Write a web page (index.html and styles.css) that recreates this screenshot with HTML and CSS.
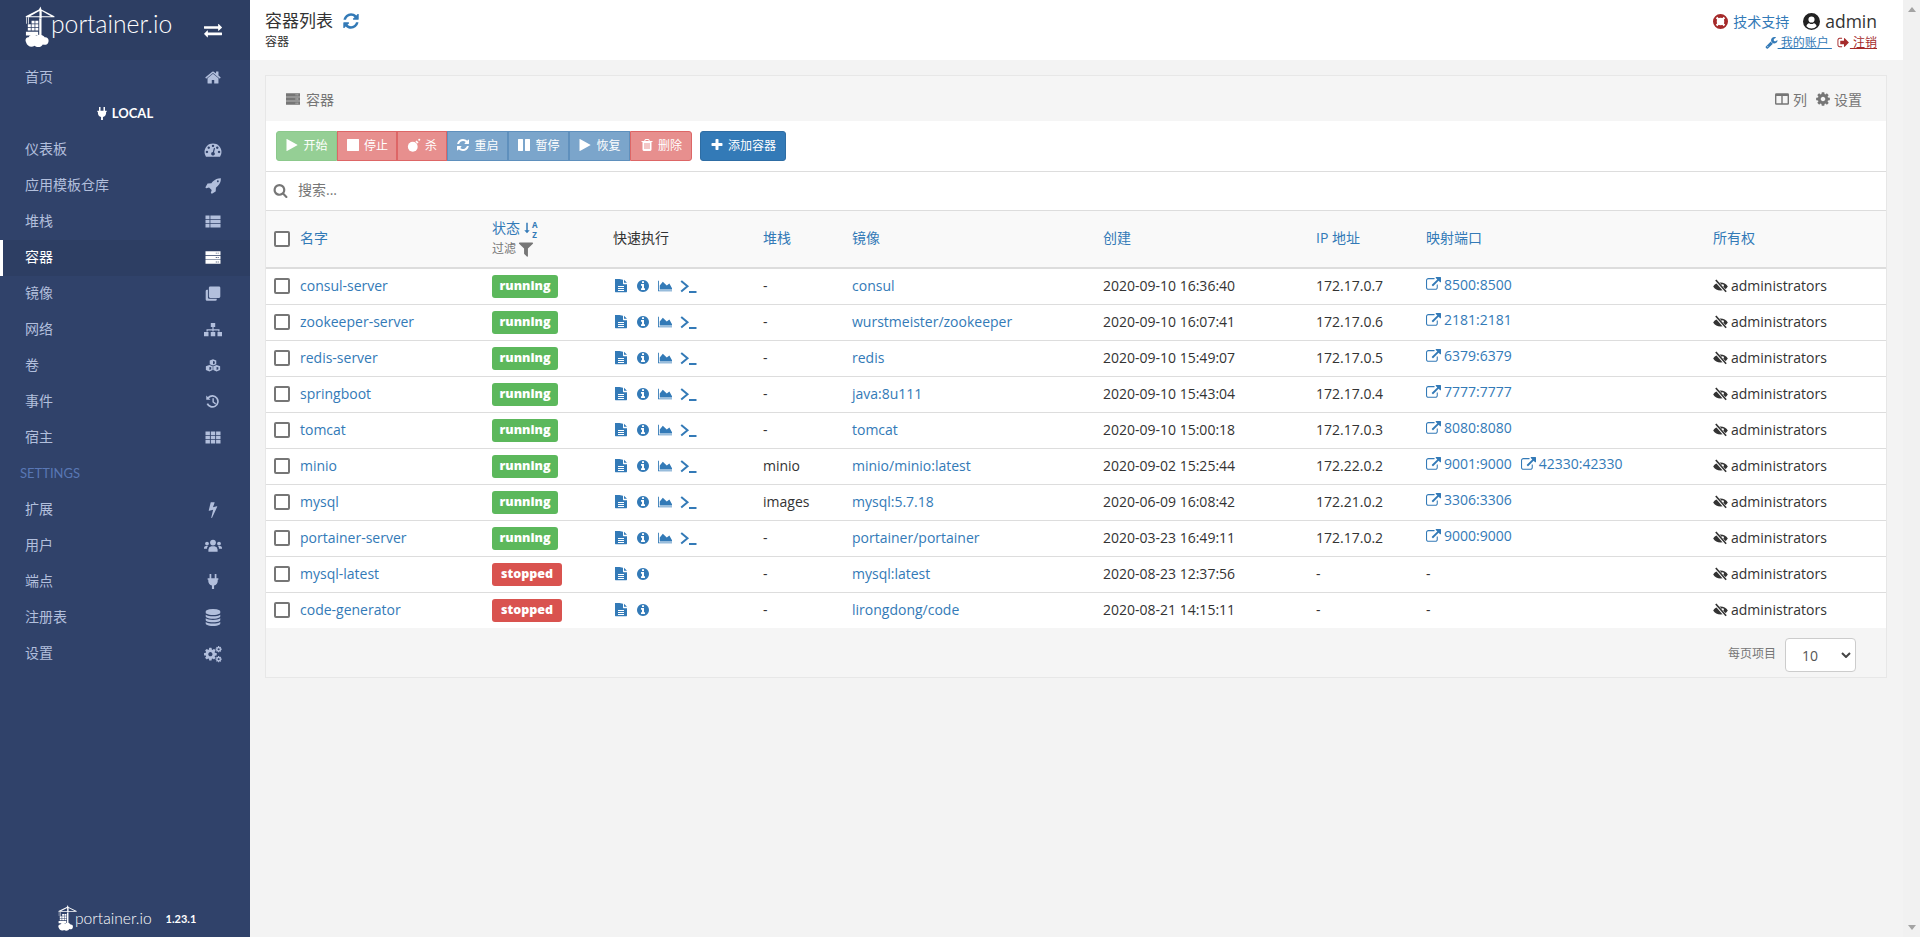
FILE: index.html
```html
<!DOCTYPE html>
<html lang="zh">
<head>
<meta charset="utf-8">
<title>Portainer</title>
<link rel="stylesheet" href="styles.css">
</head>
<body>
<svg class="defs" width="0" height="0" aria-hidden="true">
<defs>
<symbol id="i-home" viewBox="0 0 1792 1792"><path d="M1472 992v480q0 26-19 45t-45 19h-384v-384h-256v384h-384q-26 0-45-19t-19-45v-480q0-1 .5-3t.5-3l575-474 575 474q1 2 1 6zm223-69l-62 74q-8 9-21 11h-3q-13 0-21-7l-692-577-692 577q-12 8-24 7-13-2-21-11l-62-74q-8-10-7-23.5t11-21.5l719-599q32-26 76-26t76 26l244 204v-195q0-14 9-23t23-9h192q14 0 23 9t9 23v408l219 182q10 8 11 21.5t-7 23.5z"/></symbol>
<symbol id="i-refresh" viewBox="0 0 1792 1792"><path d="M1639 1056q0 5-1 7-64 268-268 434.5t-478 166.5q-146 0-282.5-55t-243.5-157l-129 129q-19 19-45 19t-45-19-19-45v-448q0-26 19-45t45-19h448q26 0 45 19t19 45-19 45l-137 137q71 66 161 102t187 36q134 0 250-65t186-179q11-17 53-117 8-23 30-23h192q13 0 22.5 9.5t9.5 22.5zm25-800v448q0 26-19 45t-45 19h-448q-26 0-45-19t-19-45 19-45l138-138q-148-137-349-137-134 0-250 65t-186 179q-11 17-53 117-8 23-30 23h-199q-13 0-22.5-9.5t-9.5-22.5v-7q65-268 270-434.5t480-166.5q146 0 284 55.5t245 156.5l130-129q19-19 45-19t45 19 19 45z"/></symbol>
<symbol id="i-play" viewBox="0 0 1792 1792"><path d="M1576 927l-1328 738q-23 13-39.5 3t-16.5-36v-1472q0-26 16.5-36t39.5 3l1328 738q23 13 23 31t-23 31z"/></symbol>
<symbol id="i-stop" viewBox="0 0 1792 1792"><path d="M1664 192v1408q0 26-19 45t-45 19h-1408q-26 0-45-19t-19-45v-1408q0-26 19-45t45-19h1408q26 0 45 19t19 45z"/></symbol>
<symbol id="i-pause" viewBox="0 0 1792 1792"><path d="M1664 192v1408q0 26-19 45t-45 19h-512q-26 0-45-19t-19-45v-1408q0-26 19-45t45-19h512q26 0 45 19t19 45zm-896 0v1408q0 26-19 45t-45 19h-512q-26 0-45-19t-19-45v-1408q0-26 19-45t45-19h512q26 0 45 19t19 45z"/></symbol>
<symbol id="i-plus" viewBox="0 0 1792 1792"><path d="M1600 736v192q0 40-28 68t-68 28h-416v416q0 40-28 68t-68 28h-192q-40 0-68-28t-28-68v-416h-416q-40 0-68-28t-28-68v-192q0-40 28-68t68-28h416v-416q0-40 28-68t68-28h192q40 0 68 28t28 68v416h416q40 0 68 28t28 68z"/></symbol>
<symbol id="i-search" viewBox="0 0 1792 1792"><path d="M1216 832q0-185-131.5-316.5t-316.5-131.5-316.5 131.5-131.5 316.5 131.5 316.5 316.5 131.5 316.5-131.5 131.5-316.5zm512 832q0 52-38 90t-90 38q-54 0-90-38l-343-342q-179 124-399 124-143 0-273.5-55.5t-225-150-150-225-55.5-273.5 55.5-273.5 150-225 225-150 273.5-55.5 273.5 55.5 225 150 150 225 55.5 273.5q0 220-124 399l343 343q37 37 37 90z"/></symbol>
<symbol id="i-trash" viewBox="0 0 1792 1792"><path d="M704 1376v-704q0-14-9-23t-23-9h-64q-14 0-23 9t-9 23v704q0 14 9 23t23 9h64q14 0 23-9t9-23zm256 0v-704q0-14-9-23t-23-9h-64q-14 0-23 9t-9 23v704q0 14 9 23t23 9h64q14 0 23-9t9-23zm256 0v-704q0-14-9-23t-23-9h-64q-14 0-23 9t-9 23v704q0 14 9 23t23 9h64q14 0 23-9t9-23zm-544-992h448l-48-117q-7-9-17-11h-317q-10 2-17 11zm928 32v64q0 14-9 23t-23 9h-96v948q0 83-47 143.5t-113 60.5h-832q-66 0-113-58.5t-47-141.5v-952h-96q-14 0-23-9t-9-23v-64q0-14 9-23t23-9h309l70-167q15-37 54-63t79-26h320q40 0 79 26t54 63l70 167h309q14 0 23 9t9 23z"/></symbol>
<symbol id="i-info" viewBox="0 0 1792 1792"><path d="M1152 1376v-160q0-14-9-23t-23-9h-96v-512q0-14-9-23t-23-9h-320q-14 0-23 9t-9 23v160q0 14 9 23t23 9h96v320h-96q-14 0-23 9t-9 23v160q0 14 9 23t23 9h448q14 0 23-9t9-23zm-128-896v-160q0-14-9-23t-23-9h-192q-14 0-23 9t-9 23v160q0 14 9 23t23 9h192q14 0 23-9t9-23zm640 416q0 209-103 385.5t-279.5 279.5-385.5 103-385.5-103-279.5-279.5-103-385.5 103-385.5 279.5-279.5 385.5-103 385.5 103 279.5 279.5 103 385.5z"/></symbol>
<symbol id="i-file" viewBox="0 0 1792 1792"><path fill-rule="evenodd" d="M1152 96v480q0 40 28 68t68 28h416v924q0 40-28 68t-68 28h-1344q-40 0-68-28t-28-68v-1600q0-40 28-68t68-28zM1280 96l384 384h-384zM512 896v128h768v-128zM512 1152v128h768v-128zM512 1408v128h768v-128z"/></symbol>
<symbol id="i-chart" viewBox="0 0 2048 1792"><path d="M2048 1536v128h-2048v-1536h128v1408zM1664 512l384 704v192h-1792v-576l448-576 576 576z"/></symbol>
<symbol id="i-term" viewBox="0 0 17 17"><path d="M1.200 3l6.300 5.300-6.300 5.300" fill="none" stroke="currentColor" stroke-width="2"/><path d="M9 13h7.500v2h-7.500z"/></symbol>
<symbol id="i-link" viewBox="0 0 1792 1792"><path d="M1408 928v320q0 119-84.5 203.5t-203.5 84.5h-832q-119 0-203.5-84.5t-84.5-203.5v-832q0-119 84.5-203.5t203.5-84.5h704q14 0 23 9t9 23v64q0 14-9 23t-23 9h-704q-66 0-113 47t-47 113v832q0 66 47 113t113 47h832q66 0 113-47t47-113v-320q0-14 9-23t23-9h64q14 0 23 9t9 23zm384-864v512q0 26-19 45t-45 19-45-19l-176-176-652 652q-10 10-23 10t-23-10l-114-114q-10-10-10-23t10-23l652-652-176-176q-19-19-19-45t19-45 45-19h512q26 0 45 19t19 45z"/></symbol>
<symbol id="i-eyeoff" viewBox="0 0 16 16"><path d="M0.200 8c3-5.600 12.600-5.600 15.600 0-3 5.600-12.600 5.600-15.600 0z"/><circle class="eye-hole" cx="10.300" cy="7" r="1.300"/><path class="eye-cut" d="M2.800 1.400l11 12.400" stroke-width="3.200" fill="none"/><path d="M3 1l11 12.600" stroke="currentColor" stroke-width="1.700" fill="none"/></symbol>
<symbol id="i-bolt" viewBox="0 0 1792 1792"><path d="M1333 566q18 20 7 44l-540 1157q-13 25-42 25-4 0-14-2-17-5-25.5-19t-4.5-30l197-808-406 101q-4 1-12 1-18 0-31-11-18-15-13-39l201-825q4-14 16-23t28-9h328q19 0 32 12.5t13 29.5q0 8-5 18l-171 463 396-98q8-2 12-2 19 0 34 15z"/></symbol>
<symbol id="i-rocket" viewBox="0 0 1792 1792"><path d="M1504 448q0-40-28-68t-68-28-68 28-28 68 28 68 68 28 68-28 28-68zm224-288q0 249-75.5 430.5t-253.5 360.5q-81 80-195 176l-20 379q-2 16-16 26l-384 224q-7 4-16 4-12 0-23-9l-64-64q-13-14-8-32l85-276-281-281-276 85q-3 1-9 1-14 0-23-9l-64-64q-17-19-5-39l224-384q10-14 26-16l379-20q96-114 176-195 188-187 358-258t431-71q14 0 24 9.5t10 22.5z"/></symbol>
<symbol id="i-dash" viewBox="0 0 1792 1792"><path d="M384 1152q0-53-37.5-90.5t-90.5-37.5-90.5 37.5-37.5 90.5 37.5 90.5 90.5 37.5 90.5-37.5 37.5-90.5zm192-448q0-53-37.5-90.5t-90.5-37.5-90.5 37.5-37.5 90.5 37.5 90.5 90.5 37.5 90.5-37.5 37.5-90.5zm428 481l101-382q6-26-7.5-48.5t-38.5-29.5-48 6.5-30 39.5l-101 382q-60 5-107 43.5t-63 98.5q-20 77 20 146t117 89 146-20 89-117q16-60-6-117t-72-91zm660-33q0-53-37.5-90.5t-90.5-37.5-90.5 37.5-37.5 90.5 37.5 90.5 90.5 37.5 90.5-37.5 37.5-90.5zm-640-640q0-53-37.5-90.5t-90.5-37.5-90.5 37.5-37.5 90.5 37.5 90.5 90.5 37.5 90.5-37.5 37.5-90.5zm448 192q0-53-37.5-90.5t-90.5-37.5-90.5 37.5-37.5 90.5 37.5 90.5 90.5 37.5 90.5-37.5 37.5-90.5zm320 448q0 261-141 483-19 29-54 29h-1402q-35 0-54-29-141-221-141-483 0-182 71-348t191-286 286-191 348-71 348 71 286 191 191 286 71 348z"/></symbol>
<symbol id="i-db" viewBox="0 0 1792 1792"><path d="M896 768q237 0 443-43t325-127v170q0 69-103 128t-280 93.5-385 34.5-385-34.5-280-93.5-103-128v-170q119 84 325 127t443 43zm0 768q237 0 443-43t325-127v170q0 69-103 128t-280 93.5-385 34.5-385-34.5-280-93.5-103-128v-170q119 84 325 127t443 43zm0-384q237 0 443-43t325-127v170q0 69-103 128t-280 93.5-385 34.5-385-34.5-280-93.5-103-128v-170q119 84 325 127t443 43zm0-1152q208 0 385 34.5t280 93.5 103 128v128q0 69-103 128t-280 93.5-385 34.5-385-34.5-280-93.5-103-128v-128q0-69 103-128t280-93.5 385-34.5z"/></symbol>
<symbol id="i-cog" viewBox="0 0 1792 1792"><path d="M1152 896q0-106-75-181t-181-75-181 75-75 181 75 181 181 75 181-75 75-181zm512-109v222q0 12-8 23t-20 13l-185 28q-19 54-39 91 35 50 107 138 10 12 10 25t-9 23q-27 37-99 108t-94 71q-12 0-26-9l-138-108q-44 23-91 38-16 136-29 186-7 28-36 28h-222q-14 0-24.5-8.5t-11.5-21.5l-28-184q-49-16-90-37l-141 107q-10 9-25 9-14 0-25-11-126-114-165-168-7-10-7-23 0-12 8-23 15-21 51-66.5t54-70.5q-27-50-41-99l-183-27q-13-2-21-12.5t-8-23.5v-222q0-12 8-23t19-13l186-28q14-46 39-92-40-57-107-138-10-12-10-24 0-10 9-23 26-36 98.5-107.5t94.5-71.5q13 0 26 10l138 107q44-23 91-38 16-136 29-186 7-28 36-28h222q14 0 24.5 8.5t11.5 21.5l28 184q49 16 90 37l142-107q9-9 24-9 13 0 25 10 129 119 165 170 7 8 7 22 0 12-8 23-15 21-51 66.5t-54 70.5q26 50 41 98l183 28q13 2 21 12.5t8 23.5z"/></symbol>
<symbol id="i-cogs" viewBox="0 0 1792 1792"><g transform="translate(-100 180) scale(.82)"><use href="#p-gear"/></g><g transform="translate(1100 60) scale(.4)"><use href="#p-gear"/></g><g transform="translate(1100 1050) scale(.4)"><use href="#p-gear"/></g></symbol>
<path id="p-gear" d="M1152 896q0-106-75-181t-181-75-181 75-75 181 75 181 181 75 181-75 75-181zm512-109v222q0 12-8 23t-20 13l-185 28q-19 54-39 91 35 50 107 138 10 12 10 25t-9 23q-27 37-99 108t-94 71q-12 0-26-9l-138-108q-44 23-91 38-16 136-29 186-7 28-36 28h-222q-14 0-24.5-8.5t-11.5-21.5l-28-184q-49-16-90-37l-141 107q-10 9-25 9-14 0-25-11-126-114-165-168-7-10-7-23 0-12 8-23 15-21 51-66.5t54-70.5q-27-50-41-99l-183-27q-13-2-21-12.5t-8-23.5v-222q0-12 8-23t19-13l186-28q14-46 39-92-40-57-107-138-10-12-10-24 0-10 9-23 26-36 98.5-107.5t94.5-71.5q13 0 26 10l138 107q44-23 91-38 16-136 29-186 7-28 36-28h222q14 0 24.5 8.5t11.5 21.5l28 184q49 16 90 37l142-107q9-9 24-9 13 0 25 10 129 119 165 170 7 8 7 22 0 12-8 23-15 21-51 66.5t-54 70.5q26 50 41 98l183 28q13 2 21 12.5t8 23.5z"/>
<symbol id="i-filter" viewBox="0 0 1792 1792"><path d="M1595 295q17 41-14 70l-493 493v742q0 42-39 59-13 5-25 5-27 0-45-19l-256-256q-19-19-19-45v-486l-493-493q-31-29-14-70 17-39 59-39h1280q42 0 59 39z"/></symbol>
<symbol id="i-wrench" viewBox="0 0 1792 1792"><path d="M448 1472q0-26-19-45t-45-19-45 19-19 45 19 45 45 19 45-19 19-45zm644-420l-682 682q-37 37-90 37-52 0-91-37l-106-108q-38-36-38-90 0-53 38-91l681-681q39 98 114.5 173.5t173.5 114.5zm634-435q0 39-23 106-47 134-164.5 217.5t-258.5 83.5q-185 0-316.5-131.5t-131.5-316.5 131.5-316.5 316.5-131.5q58 0 121.5 16.5t107.5 46.5q16 11 16 28t-16 28l-293 169v224l193 107q5-3 79-48.5t135.5-81 70.5-35.5q15 0 23.5 10t8.5 25z"/></symbol>
<symbol id="i-signout" viewBox="0 0 1792 1792"><path d="M704 1440q0 4 1 20t.5 26.5-3 23.5-10 19.5-20.5 6.5h-320q-119 0-203.5-84.5t-84.5-203.5v-704q0-119 84.5-203.5t203.5-84.5h320q13 0 22.5 9.5t9.5 22.5q0 4 1 20t.5 26.5-3 23.5-10 19.5-20.5 6.5h-320q-66 0-113 47t-47 113v704q0 66 47 113t113 47h312l11.5 1 11.5 3 8 5.5 7 9 2 13.5zm928-544q0 26-19 45l-544 544q-19 19-45 19t-45-19-19-45v-288h-448q-26 0-45-19t-19-45v-384q0-26 19-45t45-19h448v-288q0-26 19-45t45-19 45 19l544 544q19 19 19 45z"/></symbol>
<symbol id="i-exchange" viewBox="0 0 1792 1792"><path d="M1792 1184v192q0 13-9.5 22.5t-22.5 9.5h-1376v192q0 13-9.5 22.5t-22.5 9.5q-12 0-24-10l-319-320q-9-9-9-22 0-14 9-23l320-320q9-9 23-9 13 0 22.5 9.5t9.5 22.5v192h1376q13 0 22.5 9.5t9.5 22.5zm0-544q0 14-9 23l-320 320q-9 9-23 9-13 0-22.5-9.5t-9.5-22.5v-192h-1376q-13 0-22.5-9.5t-9.5-22.5v-192q0-13 9.5-22.5t22.5-9.5h1376v-192q0-14 9-23t23-9q12 0 24 10l319 319q9 9 9 23z"/></symbol>
<symbol id="i-thlist" viewBox="0 0 16 16"><path d="M0 1.500h4.300v3.800h-4.300zM5.200 1.500h10.800v3.800h-10.800zM0 6.100h4.300v3.800h-4.300zM5.200 6.100h10.800v3.800h-10.800zM0 10.700h4.300v3.800h-4.300zM5.200 10.700h10.800v3.800h-10.800z"/></symbol>
<symbol id="i-th" viewBox="0 0 16 16"><path d="M0 1.500h4.700v3.800h-4.700zM5.650 1.500h4.700v3.800h-4.700zM11.300 1.500h4.700v3.800h-4.700zM0 6.100h4.700v3.800h-4.700zM5.650 6.100h4.700v3.800h-4.700zM11.300 6.100h4.700v3.800h-4.700zM0 10.700h4.700v3.800h-4.700zM5.650 10.700h4.700v3.800h-4.700zM11.300 10.700h4.700v3.800h-4.700z"/></symbol>
<symbol id="i-server" viewBox="0 0 16 16"><path fill-rule="evenodd" d="M0 1.300h16v4h-16zM11 2.800v1h1v-1zM13 2.800v1h1v-1zM0 6h16v4h-16zM11 7.500v1h1v-1zM13 7.500v1h1v-1zM0 10.700h16v4h-16zM11 12.200v1h1v-1zM13 12.200v1h1v-1z"/></symbol>
<symbol id="i-clone" viewBox="0 0 16 16"><path d="M5 0.500h9.400a1.400 1.400 0 0 1 1.400 1.400v9.400a1.400 1.400 0 0 1-1.400 1.400h-9.400a1.400 1.400 0 0 1-1.400-1.400v-9.400a1.400 1.400 0 0 1 1.400-1.400zM2.600 4v8.200a1.400 1.400 0 0 0 1.400 1.400h8v.8a1.400 1.400 0 0 1-1.400 1.400h-9a1.400 1.400 0 0 1-1.400-1.400v-9a1.400 1.400 0 0 1 1.400-1.400z"/></symbol>
<symbol id="i-sitemap" viewBox="0 0 18 16"><path d="M6.800 1h4.400v4h-1.600v2.200h5.900v2.300h-1.200v-1.100h-4.700v1.100h-1.200v-1.100h-4.700v1.100h-1.200v-2.300h5.900v-2.200h-1.600zM0 10h4.500v4.300h-4.500zM6.750 10h4.500v4.300h-4.500zM13.500 10h4.500v4.300h-4.500z"/></symbol>
<symbol id="i-cubes" viewBox="0 0 16 16"><path fill-rule="evenodd" d="M8 1.200l3.500 1.400v4l-3.500 1.500-3.500-1.500v-4zM8 3.200v3.400l1.900-.8v-2.200zM4.200 7.500l3.500 1.400v4l-3.500 1.500-3.800-1.500v-4zM4.200 9.500v3.400l1.900-.8v-2.200zM11.800 7.500l3.800 1.400v4l-3.800 1.500-3.500-1.500v-4zM11.800 9.500v3.400l1.900-.8v-2.200z"/></symbol>
<symbol id="i-history" viewBox="0 0 16 16"><path d="M0.800 1.600l1.600 1.600a6.800 6.800 0 1 1-1.300 7.400l1.700-.7a5 5 0 1 0 .9-5.400l1.600 1.600h-4.500zM7.400 4.400h1.500v3.800l2.400 1.700-.9 1.200-3-2.200z"/></symbol>
<symbol id="i-users" viewBox="0 0 18 16"><circle cx="9" cy="4.600" r="2.900"/><circle cx="3" cy="5.600" r="1.900"/><circle cx="15" cy="5.600" r="1.900"/><path d="M4.400 13.800v-2.400a3.600 3.600 0 0 1 3-3.200h3.200a3.600 3.600 0 0 1 3 3.200v2.400zM0 10.800v-1a2 2 0 0 1 2-1.900h2a4 4 0 0 0-1 2.900zM18 10.800v-1a2 2 0 0 0-2-1.900h-2a4 4 0 0 1 1 2.900z"/></symbol>
<symbol id="i-plug" viewBox="0 0 10 14"><path d="M1.800 0h1.600v4h3.200v-4h1.600v4h1.800v1.400h-.6v1.400a4.400 4.400 0 0 1-3.400 3.900v3.300h-2v-3.300a4.400 4.400 0 0 1-3.400-3.900v-1.400h-.6v-1.400h1.800z"/></symbol>
<symbol id="i-columns" viewBox="0 0 16 16"><path fill-rule="evenodd" d="M1.500 1.500h13a1.500 1.500 0 0 1 1.500 1.500v10a1.500 1.500 0 0 1-1.500 1.500h-13a1.500 1.500 0 0 1-1.500-1.500v-10a1.500 1.500 0 0 1 1.500-1.500zM1.600 4.600v8.300h5.600v-8.300zM8.800 4.600v8.300h5.600v-8.300z"/></symbol>
<symbol id="i-bomb" viewBox="0 0 16 16"><circle cx="6.600" cy="10" r="5.600"/><path d="M9.600 4.200l1.400-1.400 2.200 2.200-1.400 1.400z"/><circle cx="14" cy="2" r="1.200"/></symbol>
<symbol id="i-ring" viewBox="0 0 16 16"><circle cx="8" cy="8" r="6" fill="none" stroke="currentColor" stroke-width="4"/><path class="ring-cut" d="M3 4.600l1.600-1.600 2.500 2.500-1.600 1.600zM11.400 3l1.600 1.600-2.500 2.500-1.600-1.600zM13 11.400l-1.600 1.600-2.500-2.500 1.600-1.600zM4.600 13l-1.600-1.600 2.500-2.500 1.600 1.600z"/></symbol>
<symbol id="i-user" viewBox="0 0 16 16"><path fill-rule="evenodd" d="M8 0a8 8 0 1 1 0 16a8 8 0 0 1 0-16zM8 3.200a2.900 2.900 0 1 0 0 5.800a2.900 2.900 0 0 0 0-5.800zM3.200 12.400a6.300 6.300 0 0 0 9.600 0c-.3-1.600-1.300-2.600-2.600-2.800a3.700 3.700 0 0 1-4.400 0c-1.300.2-2.300 1.200-2.600 2.800z"/></symbol>
<symbol id="i-sort" viewBox="0 0 8 16"><path d="M3 1h2v10h2.600l-3.600 4-3.600-4h2.600z"/></symbol>
<symbol id="i-logo" viewBox="0 0 32 44"><path d="M16.600 0l.9 3.400 13.900 7v1.200h-13.600v1.200h-2.400v-1.200h-14.600v-1.200l14-7zM15.400 5l-10 5.400h10zM17.800 5v5.400h10z"/><path d="M15.200 13h2.400v20h-2.400zM1.400 11.600h.8v7h-.8zM3.400 11.600h.8v7h-.8z"/><path d="M3 19h3.200v3h-3.200zM7 19h3.200v3h-3.200zM11 19h3.200v3h-3.200zM7 15.200h3.200v3h-3.200zM11 15.200h3.200v3h-3.200zM3 22.800h3.200v3h-3.200zM7 22.800h3.200v3h-3.200zM11 22.800h3.200v3h-3.200zM1 27h13v4h-13z"/><path d="M1 38c-1.400-3 .8-5.600 3-5 1-3.400 6-4 8-1.400 2.600-2.400 7.400-1.600 9 1.400 3.200-.4 5 2.400 3.800 5.400-.6 2.200-3 3.200-5.800 2.200-1.400 3.200-6.600 3.400-8.800 1.400-3 1.800-7.600 1.400-9.200-4z"/></symbol>
</defs>
</svg>
<div class="app">
  <aside class="sidebar">
    <div class="brand">
      <span class="logo"><svg class="logo-mark"><use href="#i-logo"/></svg><span class="logo-text">portainer.io</span></span>
      <svg class="ic exchange"><use href="#i-exchange"/></svg>
    </div>
    <nav class="nav">
      <a class="nav-item"><span>首页</span><svg class="ic nav-ic lg"><use href="#i-home"/></svg></a>
      <div class="nav-endpoint"><svg class="ic plug-s"><use href="#i-plug"/></svg><span>LOCAL</span></div>
      <a class="nav-item"><span>仪表板</span><svg class="ic nav-ic lg"><use href="#i-dash"/></svg></a>
      <a class="nav-item"><span>应用模板仓库</span><svg class="ic nav-ic lg"><use href="#i-rocket"/></svg></a>
      <a class="nav-item"><span>堆栈</span><svg class="ic nav-ic"><use href="#i-thlist"/></svg></a>
      <a class="nav-item active"><span>容器</span><svg class="ic nav-ic"><use href="#i-server"/></svg></a>
      <a class="nav-item"><span>镜像</span><svg class="ic nav-ic"><use href="#i-clone"/></svg></a>
      <a class="nav-item"><span>网络</span><svg class="ic nav-ic wide"><use href="#i-sitemap"/></svg></a>
      <a class="nav-item"><span>卷</span><svg class="ic nav-ic"><use href="#i-cubes"/></svg></a>
      <a class="nav-item"><span>事件</span><svg class="ic nav-ic"><use href="#i-history"/></svg></a>
      <a class="nav-item"><span>宿主</span><svg class="ic nav-ic"><use href="#i-th"/></svg></a>
      <div class="nav-title">SETTINGS</div>
      <a class="nav-item"><span>扩展</span><svg class="ic nav-ic lg"><use href="#i-bolt"/></svg></a>
      <a class="nav-item"><span>用户</span><svg class="ic nav-ic wide"><use href="#i-users"/></svg></a>
      <a class="nav-item"><span>端点</span><svg class="ic nav-ic"><use href="#i-plug"/></svg></a>
      <a class="nav-item"><span>注册表</span><svg class="ic nav-ic lg"><use href="#i-db"/></svg></a>
      <a class="nav-item"><span>设置</span><svg class="ic nav-ic cogs"><use href="#i-cogs"/></svg></a>
    </nav>
    <div class="side-foot">
      <svg class="foot-mark"><use href="#i-logo"/></svg><span class="foot-text">portainer.io</span><span class="foot-ver">1.23.1</span>
    </div>
  </aside>
  <main class="main">
    <header class="topbar">
      <div class="crumbs">
        <div class="page-title">容器列表 <svg class="ic refresh"><use href="#i-refresh"/></svg></div>
        <div class="page-sub">容器</div>
      </div>
      <div class="account">
        <div class="acc-top">
          <svg class="ic ring"><use href="#i-ring"/></svg><a class="support">技术支持</a>
          <svg class="ic usr"><use href="#i-user"/></svg><span class="uname">admin</span>
        </div>
        <div class="acc-bot">
          <svg class="ic lnk-ic blue"><use href="#i-wrench"/></svg><a class="lnk blue">&nbsp;我的账户&nbsp;</a>
          <svg class="ic lnk-ic red"><use href="#i-signout"/></svg><a class="lnk red">&nbsp;注销</a>
        </div>
      </div>
    </header>
    <section class="content">
      <div class="panel">
        <div class="panel-head">
          <div class="ph-left"><svg class="ic ph-ic"><use href="#i-server"/></svg>容器</div>
          <div class="ph-right"><svg class="ic ph-ic col"><use href="#i-columns"/></svg>列<svg class="ic ph-ic cog"><use href="#i-cog"/></svg>设置</div>
        </div>
        <div class="actions">
          <div class="btn-group">
            <a class="btn green first"><svg class="ic"><use href="#i-play"/></svg>开始</a>
            <a class="btn red"><svg class="ic"><use href="#i-stop"/></svg>停止</a>
            <a class="btn red"><svg class="ic"><use href="#i-bomb"/></svg>杀</a>
            <a class="btn blue"><svg class="ic"><use href="#i-refresh"/></svg>重启</a>
            <a class="btn blue"><svg class="ic"><use href="#i-pause"/></svg>暂停</a>
            <a class="btn blue"><svg class="ic"><use href="#i-play"/></svg>恢复</a>
            <a class="btn red last"><svg class="ic"><use href="#i-trash"/></svg>删除</a>
          </div>
          <a class="btn add"><svg class="ic"><use href="#i-plus"/></svg>添加容器</a>
        </div>
        <div class="search"><svg class="ic"><use href="#i-search"/></svg><span>搜索...</span></div>
        <table class="tbl">
          <colgroup><col class="c1"><col class="c2"><col class="c3"><col class="c4"><col class="c5"><col class="c6"><col class="c7"><col class="c8"><col class="c9"><col class="c10"></colgroup>
          <thead>
            <tr>
              <th><span class="cb"></span></th>
              <th><a>名字</a></th>
              <th><div class="status-line"><a>状态</a><svg class="ic sort"><use href="#i-sort"/></svg><span class="az">AZ</span></div><div class="filt">过滤<svg class="ic filter"><use href="#i-filter"/></svg></div></th>
              <th class="plain">快速执行</th>
              <th><a>堆栈</a></th>
              <th><a>镜像</a></th>
              <th><a>创建</a></th>
              <th><a>IP 地址</a></th>
              <th><a>映射端口</a></th>
              <th><a>所有权</a></th>
            </tr>
          </thead>
          <tbody>
            <tr><td><span class="cb"></span></td><td><a>consul-server</a></td><td><span class="badge ok">running</span></td><td><span class="qa"><svg class="ic"><use href="#i-file"/></svg><svg class="ic"><use href="#i-info"/></svg><svg class="ic ch"><use href="#i-chart"/></svg><svg class="ic tm"><use href="#i-term"/></svg></span></td><td>-</td><td><a>consul</a></td><td>2020-09-10 16:36:40</td><td>172.17.0.7</td><td><a class="port"><svg class="ic"><use href="#i-link"/></svg>8500:8500</a></td><td><svg class="ic eye"><use href="#i-eyeoff"/></svg>administrators</td></tr>
            <tr><td><span class="cb"></span></td><td><a>zookeeper-server</a></td><td><span class="badge ok">running</span></td><td><span class="qa"><svg class="ic"><use href="#i-file"/></svg><svg class="ic"><use href="#i-info"/></svg><svg class="ic ch"><use href="#i-chart"/></svg><svg class="ic tm"><use href="#i-term"/></svg></span></td><td>-</td><td><a>wurstmeister/zookeeper</a></td><td>2020-09-10 16:07:41</td><td>172.17.0.6</td><td><a class="port"><svg class="ic"><use href="#i-link"/></svg>2181:2181</a></td><td><svg class="ic eye"><use href="#i-eyeoff"/></svg>administrators</td></tr>
            <tr><td><span class="cb"></span></td><td><a>redis-server</a></td><td><span class="badge ok">running</span></td><td><span class="qa"><svg class="ic"><use href="#i-file"/></svg><svg class="ic"><use href="#i-info"/></svg><svg class="ic ch"><use href="#i-chart"/></svg><svg class="ic tm"><use href="#i-term"/></svg></span></td><td>-</td><td><a>redis</a></td><td>2020-09-10 15:49:07</td><td>172.17.0.5</td><td><a class="port"><svg class="ic"><use href="#i-link"/></svg>6379:6379</a></td><td><svg class="ic eye"><use href="#i-eyeoff"/></svg>administrators</td></tr>
            <tr><td><span class="cb"></span></td><td><a>springboot</a></td><td><span class="badge ok">running</span></td><td><span class="qa"><svg class="ic"><use href="#i-file"/></svg><svg class="ic"><use href="#i-info"/></svg><svg class="ic ch"><use href="#i-chart"/></svg><svg class="ic tm"><use href="#i-term"/></svg></span></td><td>-</td><td><a>java:8u111</a></td><td>2020-09-10 15:43:04</td><td>172.17.0.4</td><td><a class="port"><svg class="ic"><use href="#i-link"/></svg>7777:7777</a></td><td><svg class="ic eye"><use href="#i-eyeoff"/></svg>administrators</td></tr>
            <tr><td><span class="cb"></span></td><td><a>tomcat</a></td><td><span class="badge ok">running</span></td><td><span class="qa"><svg class="ic"><use href="#i-file"/></svg><svg class="ic"><use href="#i-info"/></svg><svg class="ic ch"><use href="#i-chart"/></svg><svg class="ic tm"><use href="#i-term"/></svg></span></td><td>-</td><td><a>tomcat</a></td><td>2020-09-10 15:00:18</td><td>172.17.0.3</td><td><a class="port"><svg class="ic"><use href="#i-link"/></svg>8080:8080</a></td><td><svg class="ic eye"><use href="#i-eyeoff"/></svg>administrators</td></tr>
            <tr><td><span class="cb"></span></td><td><a>minio</a></td><td><span class="badge ok">running</span></td><td><span class="qa"><svg class="ic"><use href="#i-file"/></svg><svg class="ic"><use href="#i-info"/></svg><svg class="ic ch"><use href="#i-chart"/></svg><svg class="ic tm"><use href="#i-term"/></svg></span></td><td>minio</td><td><a>minio/minio:latest</a></td><td>2020-09-02 15:25:44</td><td>172.22.0.2</td><td><a class="port"><svg class="ic"><use href="#i-link"/></svg>9001:9000</a><a class="port"><svg class="ic"><use href="#i-link"/></svg>42330:42330</a></td><td><svg class="ic eye"><use href="#i-eyeoff"/></svg>administrators</td></tr>
            <tr><td><span class="cb"></span></td><td><a>mysql</a></td><td><span class="badge ok">running</span></td><td><span class="qa"><svg class="ic"><use href="#i-file"/></svg><svg class="ic"><use href="#i-info"/></svg><svg class="ic ch"><use href="#i-chart"/></svg><svg class="ic tm"><use href="#i-term"/></svg></span></td><td>images</td><td><a>mysql:5.7.18</a></td><td>2020-06-09 16:08:42</td><td>172.21.0.2</td><td><a class="port"><svg class="ic"><use href="#i-link"/></svg>3306:3306</a></td><td><svg class="ic eye"><use href="#i-eyeoff"/></svg>administrators</td></tr>
            <tr><td><span class="cb"></span></td><td><a>portainer-server</a></td><td><span class="badge ok">running</span></td><td><span class="qa"><svg class="ic"><use href="#i-file"/></svg><svg class="ic"><use href="#i-info"/></svg><svg class="ic ch"><use href="#i-chart"/></svg><svg class="ic tm"><use href="#i-term"/></svg></span></td><td>-</td><td><a>portainer/portainer</a></td><td>2020-03-23 16:49:11</td><td>172.17.0.2</td><td><a class="port"><svg class="ic"><use href="#i-link"/></svg>9000:9000</a></td><td><svg class="ic eye"><use href="#i-eyeoff"/></svg>administrators</td></tr>
            <tr><td><span class="cb"></span></td><td><a>mysql-latest</a></td><td><span class="badge bad">stopped</span></td><td><span class="qa"><svg class="ic"><use href="#i-file"/></svg><svg class="ic"><use href="#i-info"/></svg></span></td><td>-</td><td><a>mysql:latest</a></td><td>2020-08-23 12:37:56</td><td>-</td><td>-</td><td><svg class="ic eye"><use href="#i-eyeoff"/></svg>administrators</td></tr>
            <tr><td><span class="cb"></span></td><td><a>code-generator</a></td><td><span class="badge bad">stopped</span></td><td><span class="qa"><svg class="ic"><use href="#i-file"/></svg><svg class="ic"><use href="#i-info"/></svg></span></td><td>-</td><td><a>lirongdong/code</a></td><td>2020-08-21 14:15:11</td><td>-</td><td>-</td><td><svg class="ic eye"><use href="#i-eyeoff"/></svg>administrators</td></tr>
          </tbody>
        </table>
        <div class="panel-foot">
          <span class="per">每页项目</span>
          <div class="select"><span>10</span><svg class="chev" viewBox="0 0 10 6"><path d="M1 1l4 4 4-4" fill="none" stroke="#444" stroke-width="2"/></svg></div>
        </div>
      </div>
    </section>
  </main>
  <div class="scrollbar"><span class="sb-up"></span><span class="sb-down"></span></div>
</div>
</body>
</html>
```
FILE: styles.css
```css
* { box-sizing: border-box; }
html, body { margin: 0; padding: 0; height: 100%; overflow: hidden; }
body { font-family: "Open Sans", "Noto Sans CJK SC", sans-serif; font-size: 14px; color: #333; background: #f3f3f3; }
.defs { position: absolute; }
a { color: #337ab7; text-decoration: none; }
.ic { display: inline-block; width: 14px; height: 14px; fill: currentColor; flex: none; }
.ring-cut { fill: #fff; }
.eye-hole { fill: #fff; }
.eye-cut { stroke: #fff; }

.app { display: flex; height: 937px; }
.sidebar { width: 250px; flex: none; background: #30426a; display: flex; flex-direction: column; }
.brand { height: 60px; background: #2d3e63; display: flex; align-items: center; justify-content: space-between; padding: 0 28px 0 25px; color: #fff; }
.logo { display: flex; align-items: flex-start; margin-top: -6px; }
.logo-mark { width: 30px; height: 44px; fill: #fff; flex: none; }
.logo-text { font-family: Lato, sans-serif; font-weight: 300; font-size: 24.7px; line-height: 30px; color: #fff; margin: 4px 0 0 -4px; }
.exchange { width: 18px; height: 18px; }
.nav { display: flex; flex-direction: column; }
.nav-item { height: 36px; display: flex; align-items: center; justify-content: space-between; padding: 0 28px 0 25px; color: #b2bfdc; font-size: 14px; }
.nav-item span { margin-top: -4px; }
.nav-ic { width: 18px; height: 15px; margin-top: -1px; }
.nav-ic.lg { height: 17px; }
.nav-ic.wide { height: 16px; }
.nav-ic.cogs { height: 18px; }
.nav-item.active { background: #2d3e63; color: #fff; border-left: 3px solid #fff; padding-left: 22px; }
.nav-endpoint { height: 36px; display: flex; align-items: center; justify-content: center; gap: 5px; color: #fff; font-weight: 700; font-size: 13px; font-family: Lato, sans-serif; padding-bottom: 2px; }
.plug-s { width: 10px; height: 13px; }
.nav-title { height: 36px; display: flex; align-items: center; padding: 0 0 2px 20px; color: #5977b4; font-size: 13px; font-family: Lato, sans-serif; }
.side-foot { margin-top: auto; height: 38px; display: flex; align-items: center; padding-left: 58px; color: #fff; }
.foot-mark { width: 19px; height: 28px; fill: #fff; flex: none; }
.foot-text { font-family: Lato, sans-serif; font-weight: 300; font-size: 15.6px; margin-left: -2px; }
.foot-ver { font-family: Lato, sans-serif; font-weight: 700; font-size: 11px; margin-left: 14px; }

.main { flex: 1; min-width: 0; display: flex; flex-direction: column; }
.topbar { height: 60px; background: #fff; display: flex; justify-content: space-between; padding: 0 26px 0 15px; flex: none; }
.page-title { font-size: 17px; color: #333; line-height: 22px; margin-top: 10px; display: flex; align-items: center; gap: 9px; }
.refresh { width: 18px; height: 18px; color: #337ab7; }
.page-sub { font-size: 12px; line-height: 14px; color: #333; margin-top: 3px; }
.account { text-align: right; }
.acc-top { display: flex; align-items: center; justify-content: flex-end; height: 22px; margin-top: 10px; font-size: 14px; }
.ring { width: 15px; height: 15px; color: #a52a2a; margin-right: 5px; }
.usr { width: 17px; height: 17px; color: #222; margin: 0 5px 0 14px; }
.uname { font-size: 17.5px; color: #333; }
.acc-bot { display: flex; align-items: center; justify-content: flex-end; height: 14px; margin-top: 3px; font-size: 12px; }
.lnk-ic { width: 13px; height: 13px; margin-left: 5px; }
.lnk { text-decoration: underline; }
.lnk.blue, .lnk-ic.blue { color: #337ab7; }
.lnk.red, .lnk-ic.red { color: #a52a2a; }

.content { padding: 15px 16px 0 15px; }
.panel { background: #fff; border: 1px solid #e7e7e7; }
.panel-head { height: 45px; background: #f5f5f5; display: flex; align-items: center; justify-content: space-between; padding: 0 24px 0 20px; color: #767676; font-size: 14px; }
.ph-left, .ph-right { display: flex; align-items: center; }
.ph-ic { margin-right: 6px; }
.ph-ic.col { margin-right: 4px; }
.ph-ic.cog { width: 16px; height: 16px; margin-left: 8px; margin-right: 3px; }
.actions { height: 51px; display: flex; align-items: center; padding: 0 10px 1px; gap: 8px; border-bottom: 1px solid #ddd; }
.btn-group { display: flex; }
.btn { height: 30px; display: inline-flex; align-items: center; justify-content: center; gap: 4px; font-size: 12px; color: #fff; border: 1px solid; white-space: nowrap; padding-bottom: 2px; }
.btn .ic { width: 14px; height: 14px; }
.btn.green { background: #95cf95; border-color: #8cc98c; width: 61px; }
.btn.red { background: #e78f8e; border-color: #d66; width: 60px; }
.btn.blue { background: #7ba5cb; border-color: #5f90bd; width: 61px; }
.btn-group .btn:nth-child(3) { width: 50px; }
.btn.first { border-radius: 3px 0 0 3px; }
.btn.last { border-radius: 0 3px 3px 0; width: 62px; }
.btn.add { background: #337ab7; border-color: #2e6da4; border-radius: 3px; width: 86px; }
.search { height: 39px; display: flex; align-items: center; gap: 10px; padding: 0 0 2px 7px; color: #767676; border-bottom: 1px solid #ddd; font-size: 14px; }
.search .ic { width: 15px; height: 15px; }
.search span { margin-top: -2px; }
.tbl { width: 100%; border-collapse: collapse; table-layout: fixed; }
.c1 { width: 34px; } .c2 { width: 192px; } .c3 { width: 121px; } .c4 { width: 150px; } .c5 { width: 89px; }
.c6 { width: 251px; } .c7 { width: 213px; } .c8 { width: 110px; } .c9 { width: 287px; } .c10 { width: auto; }
.tbl th { height: 57px; background: #f9f9f9; border-bottom: 2px solid #ddd; text-align: left; font-weight: 400; padding: 0 0 3px; vertical-align: middle; line-height: 20px; }
.tbl th:nth-child(3), .tbl th:first-child { padding-bottom: 0; }
.tbl th.plain { color: #333; }
.tbl td { height: 36px; border-top: 1px solid #ddd; padding: 0 0 2px; white-space: nowrap; vertical-align: middle; }
.tbl tbody tr:first-child td { border-top: 0; }
.tbl th:first-child, .tbl td:first-child { padding-left: 8px; }
.cb { display: block; width: 16px; height: 16px; border: 2px solid #767676; border-radius: 2px; background: #fff; }
.tbl td .cb, .tbl td .qa { margin-top: 2px; }
.status-line { display: flex; align-items: center; height: 20px; margin-top: -1px; margin-bottom: 1px; }
.sort { width: 6px; height: 12px; color: #337ab7; margin-left: 4px; }
.az { display: block; writing-mode: vertical-rl; text-orientation: upright; font-size: 8px; line-height: 7px; letter-spacing: -1.5px; color: #337ab7; font-weight: 700; margin-left: 1px; }
.filt { color: #767676; font-size: 12px; display: flex; align-items: center; gap: 1px; height: 20px; }
.filter { width: 18px; height: 18px; color: #767676; }
.badge { display: inline-block; height: 23px; line-height: 22px; font-weight: 800; font-size: 12.5px; color: #fff; border-radius: 3px; text-align: center; margin-top: 2px; vertical-align: top; }
.badge.ok { background: #5cb85c; width: 66px; }
.badge.bad { background: #d9534f; width: 70px; }
.qa { display: flex; align-items: center; color: #337ab7; gap: 8px; padding-left: 1px; }
.qa .tm { width: 17px; height: 17px; }
.port { display: inline-flex; align-items: center; gap: 3px; margin-right: 9px; }
.port .ic { width: 15px; height: 15px; margin-top: 1px; }
.eye { width: 15px; height: 15px; color: #333; vertical-align: -3px; margin-right: 3px; }
.panel-foot { height: 49px; background: #f5f5f5; display: flex; align-items: center; justify-content: flex-end; padding: 5px 30px 0 0; gap: 9px; color: #767676; font-size: 12px; }
.per { margin-top: -4px; }
.select { width: 71px; height: 34px; border: 1px solid #ccc; border-radius: 4px; background: #fff; display: flex; align-items: center; justify-content: space-between; padding: 0 4px 0 16px; font-size: 14px; color: #555; }
.chev { width: 10px; height: 6px; }

.scrollbar { width: 17px; flex: none; background: #f1f1f1; display: flex; flex-direction: column; align-items: center; justify-content: space-between; padding: 7px 0; }
.sb-up { border-left: 4px solid transparent; border-right: 4px solid transparent; border-bottom: 5px solid #a3a3a3; }
.sb-down { border-left: 4px solid transparent; border-right: 4px solid transparent; border-top: 5px solid #a3a3a3; }
```
